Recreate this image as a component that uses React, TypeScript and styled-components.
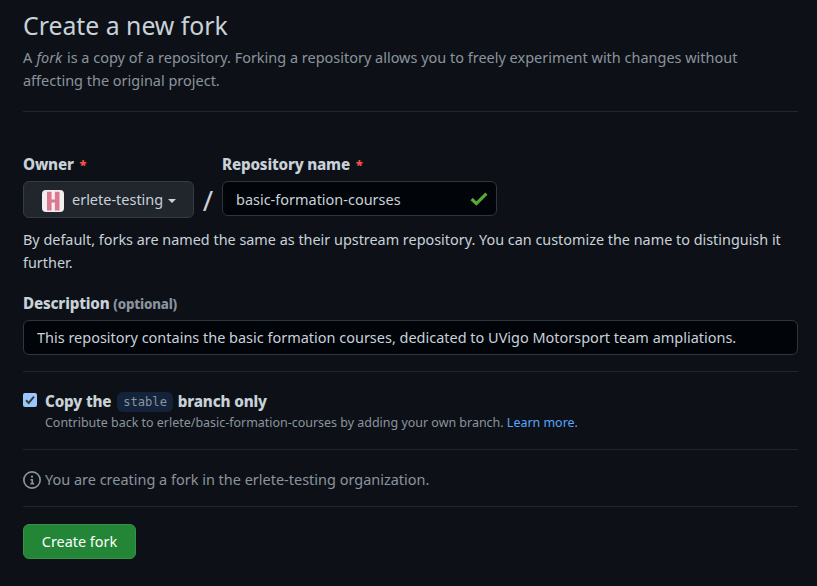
import React from "react";
import styled, { createGlobalStyle } from "styled-components";

const GlobalStyle = createGlobalStyle`
  *, *::before, *::after { box-sizing: border-box; }
  html, body { margin: 0; background: #0d1117; }
  body { font: 14.47px/23px "Noto Sans", sans-serif; color: #c9d1d9; }
  button, input { font: inherit; color: inherit; }
`;

const Page = styled.main`
  display: flex;
  flex-direction: column;
  height: 586px;
  padding: 8px 19px 0 23px;
  overflow: hidden;
`;
const Title = styled.h1`
  margin: 0;
  font-size: 24.8px;
  font-weight: 400;
  line-height: 35px;
`;
const Lead = styled.p`
  margin: 3px 0 0;
  color: #8b949e;
  font-size: 14.48px;
`;
const Term = styled.em`
  margin: 0 1px 0 0.5px;
`;
const Divider = styled.hr<{ $top: number; $bottom: number }>`
  width: 100%;
  height: 1px;
  flex: none;
  margin: ${(p) => p.$top}px 0 ${(p) => p.$bottom}px;
  border: 0;
  background: #21262d;
`;
const Fields = styled.div`
  display: flex;
  align-items: flex-start;
  height: 65px;
`;
const Field = styled.div`
  display: flex;
  flex-direction: column;
`;
const Label = styled.label`
  height: 23px;
  margin-bottom: 5px;
  font-size: 15.2px;
  font-weight: 800;
  letter-spacing: -0.18px;
  white-space: nowrap;
`;
const Required = styled.span`
  color: #f85149;
  font-size: 13px;
  margin-left: 2px;
`;
const Optional = styled.small`
  color: #8b949e;
  font-size: 13.3px;
`;
const OwnerButton = styled.button`
  display: flex;
  align-items: center;
  width: 171px;
  height: 37px;
  padding: 0 0 0 18px;
  border: 1px solid #363b42;
  border-radius: 6px;
  background: #21262d;
  white-space: nowrap;
`;
const Avatar = styled.svg`
  width: 22px;
  height: 22px;
  margin: 2px 8px 0 0;
  flex: none;
`;
const Caret = styled.span`
  margin: 2px 0 0 5px;
  border: 4px solid transparent;
  border-top-color: #c9d1d9;
  border-bottom: 0;
`;
const Slash = styled.span`
  width: 28px;
  padding-top: 31px;
  font-size: 28px;
  line-height: 32px;
  text-align: center;
`;
const InputFrame = styled.div<{ $width?: string; $shift?: number }>`
  display: flex;
  align-items: center;
  width: ${(p) => p.$width ?? "100%"};
  height: 35px;
  flex: none;
  padding: ${(p) => p.$shift ?? 0}px 8px 0 13px;
  border: 1px solid #30363d;
  border-radius: 6px;
  background: #010409;
`;
const Input = styled.input`
  flex: 1;
  min-width: 0;
  height: 23px;
  padding: 0;
  border: 0;
  outline: 0;
  background: transparent;
`;
const Check = styled.svg`
  width: 18px;
  height: 16px;
  flex: none;
`;
const Hint = styled.p`
  margin: 10px 0 17px;
  padding-bottom: 1px;
  font-size: 14.4px;
`;
const BranchOption = styled.div`
  display: flex;
  align-items: flex-start;
  gap: 8px;
  height: 44px;
`;
const Checkbox = styled.svg`
  width: 14px;
  height: 14px;
  margin-top: 3px;
  flex: none;
`;
const BranchTitle = styled.div`
  height: 23px;
  font-size: 15.2px;
  line-height: 23px;
  font-weight: 800;
  letter-spacing: -0.15px;
`;
const Branch = styled.code`
  display: inline-block;
  height: 20px;
  margin: 2px 1px 0 2px;
  padding: 0 6px;
  border-radius: 6px;
  background: #13233a;
  color: #8b949e;
  font: 400 12.1px/21px "DejaVu Sans Mono", monospace;
  letter-spacing: 0;
  vertical-align: top;
`;
const Note = styled.p`
  margin: 0;
  color: #8b949e;
  font-size: 12.46px;
  line-height: 20px;
`;
const Link = styled.a`
  color: #58a6ff;
`;
const Info = styled.div`
  display: flex;
  align-items: center;
  gap: 4px;
  height: 23px;
  color: #8b949e;
`;
const InfoIcon = styled.svg`
  width: 18px;
  height: 18px;
  flex: none;
`;
const Submit = styled.button`
  width: 113px;
  height: 35px;
  padding: 0;
  border: 1px solid #36924a;
  border-radius: 6px;
  background: #238636;
  color: #fff;
  font-size: 14.4px;
`;

export default function App() {
  return (
    <>
      <GlobalStyle />
      <Page>
        <Title>Create a new fork</Title>
        <Lead>
          A <Term>fork</Term> is a copy of a repository. Forking a repository allows you to freely
          experiment with changes without affecting the original project.
        </Lead>
        <Divider $top={19} $bottom={41} />
        <Fields>
          <Field>
            <Label>
              Owner <Required>*</Required>
            </Label>
            <OwnerButton type="button">
              <Avatar viewBox="0 0 22 22">
                <rect width="22" height="22" rx="4" fill="#f0f0f0" />
                <path d="M5 1.7h4.6v7.8h3.3V1.7h4.6v18.8h-4.6v-8H9.6v8H5z" fill="#dc7890" />
              </Avatar>
              erlete-testing
              <Caret />
            </OwnerButton>
          </Field>
          <Slash>/</Slash>
          <Field>
            <Label htmlFor="name">
              Repository name <Required>*</Required>
            </Label>
            <InputFrame $width="275px" $shift={1}>
              <Input id="name" defaultValue="basic-formation-courses" />
              <Check viewBox="0 0 18 16">
                <path d="M1.6 8l4.8 4.6L16.4 2.6" fill="none" stroke="#57a931" strokeWidth="3.2" />
              </Check>
            </InputFrame>
          </Field>
        </Fields>
        <Hint>
          By default, forks are named the same as their upstream repository. You can customize the
          name to distinguish it further.
        </Hint>
        <Label htmlFor="description">
          Description <Optional>(optional)</Optional>
        </Label>
        <InputFrame>
          <Input
            id="description"
            defaultValue="This repository contains the basic formation courses, dedicated to UVigo Motorsport team ampliations."
          />
        </InputFrame>
        <Divider $top={16} $bottom={18} />
        <BranchOption>
          <Checkbox viewBox="0 0 14 14">
            <rect width="14" height="14" rx="2" fill="#99c8ff" />
            <path d="M3 7.2l2.7 2.7L11 3.6" fill="none" stroke="#3b3b3b" strokeWidth="2" />
          </Checkbox>
          <div>
            <BranchTitle>
              Copy the <Branch>stable</Branch> branch only
            </BranchTitle>
            <Note>
              Contribute back to erlete/basic-formation-courses by adding your own branch.{" "}
              <Link>Learn more.</Link>
            </Note>
          </div>
        </BranchOption>
        <Divider $top={15} $bottom={18} />
        <Info>
          <InfoIcon viewBox="0 0 16 16" fill="currentColor">
            <path d="M0 8a8 8 0 1 1 16 0A8 8 0 0 1 0 8Zm8-6.5a6.5 6.5 0 1 0 0 13 6.5 6.5 0 0 0 0-13ZM6.5 7.75A.75.75 0 0 1 7.25 7h1a.75.75 0 0 1 .75.75v2.75h.25a.75.75 0 0 1 0 1.5h-2a.75.75 0 0 1 0-1.5h.25v-2h-.25a.75.75 0 0 1-.75-.75ZM8 6a1 1 0 1 1 0-2 1 1 0 0 1 0 2Z" />
          </InfoIcon>
          You are creating a fork in the erlete-testing organization.
        </Info>
        <Divider $top={15} $bottom={17} />
        <Submit type="button">Create fork</Submit>
      </Page>
    </>
  );
}
